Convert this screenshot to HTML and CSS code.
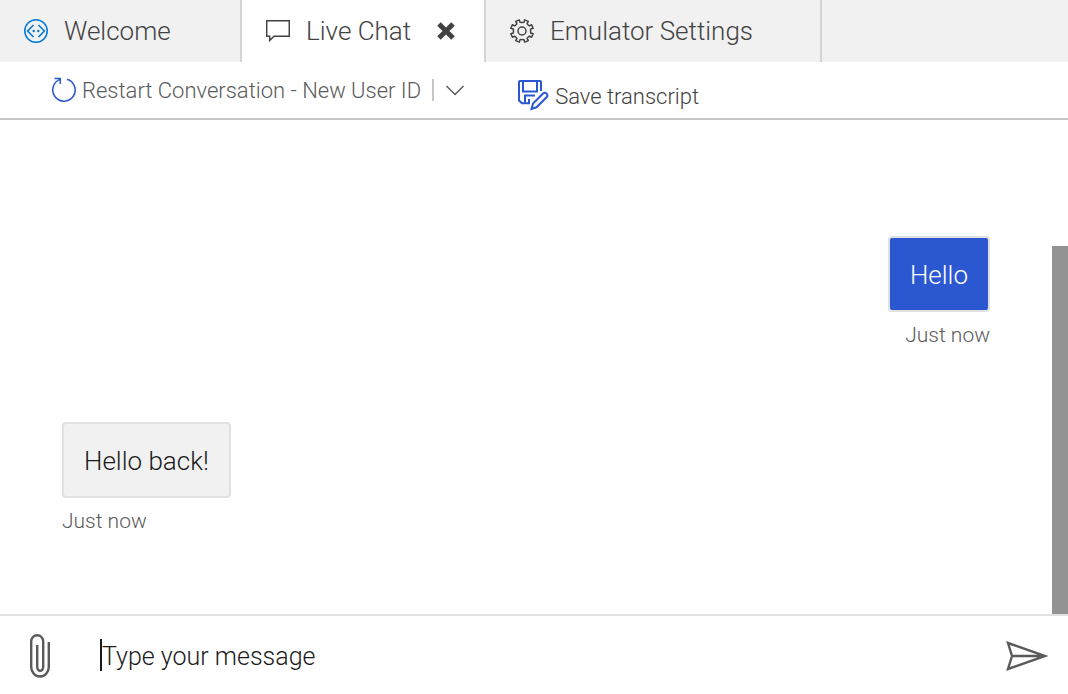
FILE: index.html
```html
<!DOCTYPE html>
<html lang="en">
<head>
  <meta charset="UTF-8">
  <meta name="viewport" content="width=device-width, initial-scale=1">
  <title>Live Chat</title>
  <link rel="stylesheet" href="styles.css">
</head>
<body>
  <nav class="tabs">
    <div class="tab tab-welcome">
      <button type="button" class="tab-label">
        <svg class="tab-icon icon-welcome" viewBox="0 0 24 24">
          <circle cx="12" cy="12" r="11.2" stroke-width="1.5"/>
          <path d="M9.5 6L3.6 12L9.5 18M14.5 6L20.4 12L14.5 18" stroke-width="1.6"/>
          <circle class="dot" cx="9.7" cy="12" r="1.2"/>
          <circle class="dot" cx="14.3" cy="12" r="1.2"/>
        </svg>
        Welcome
      </button>
    </div>
    <div class="tab tab-chat active">
      <button type="button" class="tab-label">
        <svg class="tab-icon" viewBox="0 0 24 24">
          <path d="M.7 1.7H23.3V17.3H8L3.7 21.5V17.3H.7Z"/>
        </svg>
        Live Chat
      </button>
      <button type="button" class="close" aria-label="Close">
        <svg viewBox="0 0 18 18"><path d="M2 2L16 16M16 2L2 16"/></svg>
      </button>
    </div>
    <div class="tab tab-settings">
      <button type="button" class="tab-label">
        <svg class="tab-icon" viewBox="0 0 24 24">
          <path d="M10 3.3L9.3.9L5.7 2.4L6.9 4.6Q6 6 4.6 6.9L2.4 5.7L.9 9.3L3.3 10Q3.6 12 3.3 14L.9 14.7L2.4 18.3L4.6 17.1Q6 18 6.9 19.4L5.7 21.6L9.3 23.1L10 20.7Q12 20.4 14 20.7L14.7 23.1L18.3 21.6L17.1 19.4Q18 18 19.4 17.1L21.6 18.3L23.1 14.7L20.7 14Q20.4 12 20.7 10L23.1 9.3L21.6 5.7L19.4 6.9Q18 6 17.1 4.6L18.3 2.4L14.7.9L14 3.3Q12 3.6 10 3.3Z" stroke-linejoin="round"/>
          <circle cx="12" cy="12" r="4"/>
        </svg>
        Emulator Settings
      </button>
    </div>
  </nav>

  <header class="toolbar">
    <div class="restart">
      <button type="button" class="tool">
        <svg class="icon-restart" viewBox="0 0 24 26">
          <path d="M15 2.2A11.2 11.2 0 1 1 8.3 2.4M2.5 1.4H8.3V7"/>
        </svg>
        Restart Conversation - New User ID
      </button>
      <button type="button" class="more" aria-label="Restart options">
        <svg viewBox="0 0 18 11"><path d="M.5 1L9 9.5L17.5 1"/></svg>
      </button>
    </div>
    <button type="button" class="tool save">
      <svg class="icon-save" viewBox="0 0 32 32">
        <path d="M12 23.3H4L1 20.5V2Q1 1 2 1H22Q23 1 23 2V11M5 1V11.5H19V1M7 23V15.5H17M11 23V19"/>
        <path d="M13.5 29L15 23.5L25.3 13.3Q27 12 28.6 13.6Q30.2 15.3 28.8 17L18.5 27.3Z"/>
      </svg>
      Save transcript
    </button>
  </header>

  <main class="chat">
    <div class="messages">
      <div class="message from-me">
        <p class="bubble">Hello</p>
        <span class="time">Just now</span>
      </div>
      <div class="message">
        <p class="bubble">Hello back!</p>
        <span class="time">Just now</span>
      </div>
    </div>
    <div class="scrollbar"></div>
  </main>

  <form class="send-box">
    <button type="button" class="attach" aria-label="Attach file">
      <svg viewBox="0 0 20 44">
        <path d="M18.8 8V33A8.8 9.5 0 0 1 1.2 33V7.5A6 6.3 0 0 1 13.2 7.5V33A3 3.8 0 0 1 7.2 33V11"/>
      </svg>
    </button>
    <div class="field">
      <input type="text" aria-label="Message" placeholder="Type your message">
    </div>
    <button type="submit" class="send" aria-label="Send">
      <svg viewBox="0 0 44 30">
        <path d="M2 2L39 15L2 28L6 15ZM6 15H39"/>
      </svg>
    </button>
  </form>
</body>
</html>
```
FILE: styles.css
```css
* {
  box-sizing: border-box;
}

body {
  margin: 0;
  min-height: 100vh;
  display: flex;
  flex-direction: column;
  background: #fff;
  color: #424242;
  font-family: Roboto, "Liberation Sans", sans-serif;
  font-size: 26px;
  font-weight: 300;
}

button {
  display: flex;
  align-items: center;
  margin: 0;
  padding: 0;
  border: 0;
  background: none;
  color: inherit;
  font: inherit;
  white-space: nowrap;
}

svg {
  display: block;
  flex: none;
  fill: none;
  stroke: currentColor;
}

/* tabs */
.tabs {
  display: flex;
  height: 62px;
  background: #f1f1f1;
}

.tab {
  display: flex;
  align-items: center;
  padding-left: 24px;
  border-right: 2px solid #d4d4d4;
}

.tab.active {
  background: #fff;
}

.tab-welcome {
  width: 242px;
}

.tab-chat {
  width: 244px;
}

.tab-settings {
  width: 336px;
}

.tab-label {
  gap: 16px;
}

.tab-icon {
  width: 24px;
  height: 24px;
  stroke-width: 1.5;
}

.icon-welcome {
  color: #0078d4;
}

.dot {
  fill: currentColor;
  stroke: none;
}

.close {
  margin-left: 26px;
}

.close svg {
  width: 18px;
  height: 18px;
  stroke-width: 5;
}

/* toolbar */
.toolbar {
  display: flex;
  align-items: center;
  gap: 54px;
  height: 58px;
  padding-left: 52px;
  border-bottom: 2px solid #c6c6c6;
  font-size: 22px;
}

.restart {
  display: flex;
  align-items: center;
  color: #5a5a5a;
}

.tool {
  gap: 6px;
}

.icon-restart {
  width: 24px;
  height: 26px;
  color: #2b57d0;
  stroke-width: 1.5;
}

.more {
  height: 22px;
  margin-left: 11px;
  padding-left: 12px;
  border-left: 2px solid #c6c6c6;
}

.more svg {
  width: 18px;
  height: 11px;
  stroke-width: 1.5;
}

.save {
  gap: 5px;
  padding-top: 12px;
}

.icon-save {
  width: 32px;
  height: 32px;
  color: #2b57d0;
  stroke-width: 2;
}

/* conversation */
.chat {
  flex: 1;
  display: flex;
}

.messages {
  flex: 1;
  display: flex;
  flex-direction: column;
  justify-content: flex-end;
  gap: 74px;
  padding: 24px 62px 80px;
}

.message {
  display: flex;
  flex-direction: column;
  align-items: flex-start;
  gap: 10px;
}

.bubble {
  margin: 0;
  padding: 21px 20px 19px;
  border: 2px solid #e1e1e1;
  border-radius: 4px;
  background: #f1f1f1;
  color: #1b1b1b;
  line-height: 32px;
}

.from-me {
  align-items: flex-end;
}

.from-me .bubble {
  background: #2b57d0;
  color: #fff;
}

.time {
  color: #5a5a5a;
  font-size: 21px;
  line-height: 26px;
}

.scrollbar {
  width: 16px;
  margin-top: 126px;
  background: #939393;
}

/* send box */
.send-box {
  display: flex;
  align-items: center;
  height: 80px;
  padding: 2px 18px 0 30px;
  border-top: 2px solid #e1e1e1;
  color: #5a5a5a;
}

.attach svg {
  width: 20px;
  height: 44px;
  stroke-width: 2.4;
}

.field {
  position: relative;
  flex: 1;
  margin-left: 50px;
}

/* text cursor */
.field::before {
  content: "";
  position: absolute;
  top: 0;
  left: 0;
  width: 2px;
  height: 32px;
  background: #1b1b1b;
}

.field input {
  display: block;
  width: 100%;
  height: 34px;
  padding: 0 0 0 2px;
  border: 0;
  outline: 0;
  background: none;
  color: #1b1b1b;
  font: inherit;
  font-size: 25px;
}

.field input::placeholder {
  color: #1b1b1b;
  opacity: 1;
}

.send svg {
  width: 44px;
  height: 30px;
  stroke-width: 2.4;
}
```
